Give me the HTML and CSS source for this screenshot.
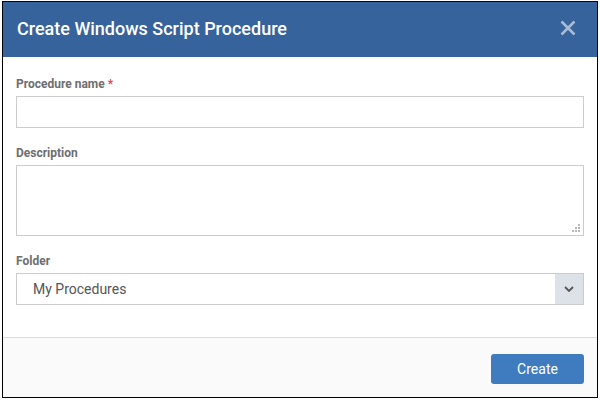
FILE: index.html
```html
<!DOCTYPE html>
<html lang="en">

<head>
    <meta charset="UTF-8">
    <meta name="viewport" content="width=device-width, initial-scale=1.0">
    <title>Create Windows Script Procedure</title>
    <link rel="stylesheet" href="styles.css">
</head>

<body>
    <div class="dialog">
        <div class="dialog-header">
            <h1 class="dialog-title">Create Windows Script Procedure</h1>
            <span class="close">
                <svg width="16" height="16" viewBox="0 0 16 16">
                    <path d="M1.5 1.5 L14.5 14.5 M14.5 1.5 L1.5 14.5" stroke="#a9bbd4" stroke-width="2.6" fill="none"/>
                </svg>
            </span>
        </div>
        <div class="dialog-body">
            <div class="field">
                <label class="field-label">Procedure name <span class="req">*</span></label>
                <div class="input"></div>
            </div>
            <div class="field">
                <label class="field-label">Description</label>
                <div class="input textarea">
                    <svg class="grip" width="8" height="8" viewBox="0 0 8 8">
                        <rect x="6" y="0" width="2" height="2" fill="#b8b8b8"/>
                        <rect x="3" y="3" width="2" height="2" fill="#b8b8b8"/>
                        <rect x="6" y="3" width="2" height="2" fill="#b8b8b8"/>
                        <rect x="0" y="6" width="2" height="2" fill="#b8b8b8"/>
                        <rect x="3" y="6" width="2" height="2" fill="#b8b8b8"/>
                        <rect x="6" y="6" width="2" height="2" fill="#b8b8b8"/>
                    </svg>
                </div>
            </div>
            <div class="field">
                <label class="field-label">Folder</label>
                <div class="input select">
                    <span class="select-value">My Procedures</span>
                    <span class="select-btn">
                        <svg width="10" height="6" viewBox="0 0 10 6">
                            <path d="M1 1 L5 5 L9 1" stroke="#555" stroke-width="1.8" fill="none"/>
                        </svg>
                    </span>
                </div>
            </div>
        </div>
        <div class="dialog-footer">
            <button class="btn-primary">Create</button>
        </div>
    </div>
</body>

</html>
```

FILE: styles.css
```css
body {
    margin: 0;
    background: #fff;
    font-family: Roboto, "Liberation Sans", sans-serif;
}

.dialog {
    margin: 1px 0 0 2px;
    width: 596px;
    height: 397px;
    box-sizing: border-box;
    border: 1px solid #000;
    display: flex;
    flex-direction: column;
    background: #fff;
}

.dialog-header {
    height: 55px;
    background: #36639b;
    display: flex;
    align-items: center;
    justify-content: space-between;
    padding: 0 21px 0 14px;
}

.dialog-title {
    margin: 0 0 3px 0;
    font-size: 18px;
    font-weight: 500;
    color: #fff;
}

.close {
    display: flex;
    margin-bottom: 3px;
}

.dialog-body {
    flex: 1;
    padding: 19px 13px 0 13px;
}

.field {
    margin-bottom: 17px;
}

.field-label {
    display: block;
    font-size: 12px;
    line-height: 16px;
    font-weight: 700;
    color: #6e6e6e;
    margin-bottom: 4px;
}

.req {
    color: #e0474c;
}

.input {
    height: 32px;
    box-sizing: border-box;
    border: 1px solid #ccc;
    position: relative;
}

.textarea {
    height: 71px;
}

.grip {
    position: absolute;
    right: 3px;
    bottom: 3px;
}

.select {
    display: flex;
    align-items: center;
    justify-content: space-between;
}

.select-value {
    padding-left: 16px;
    font-size: 14px;
    color: #555;
}

.select-btn {
    width: 28px;
    height: 30px;
    background: #dde2e8;
    display: flex;
    align-items: center;
    justify-content: center;
}

.dialog-footer {
    height: 60px;
    box-sizing: border-box;
    border-top: 1px solid #ddd;
    background: #fafafa;
    display: flex;
    justify-content: flex-end;
    align-items: flex-start;
    padding: 16px 13px 0 0;
}

.btn-primary {
    width: 93px;
    height: 30px;
    border: none;
    border-radius: 3px;
    background: #3f7bbf;
    color: #fff;
    font-family: Roboto, "Liberation Sans", sans-serif;
    font-size: 14px;
}
```
